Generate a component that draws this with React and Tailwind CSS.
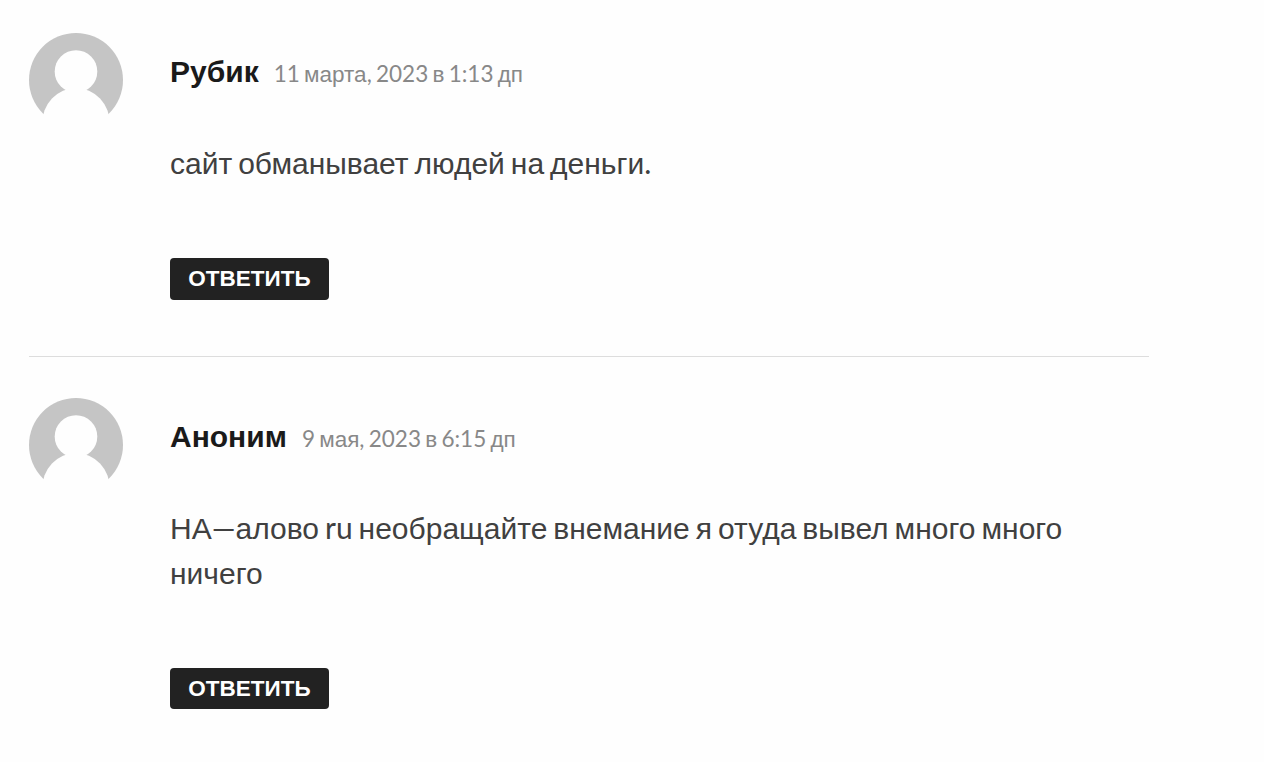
import React from 'react';

const comments = [
  {
    id: 1,
    author: 'Рубик',
    date: '11 марта, 2023 в 1:13 дп',
    text: 'сайт обманывает людей на деньги.',
  },
  {
    id: 2,
    author: 'Аноним',
    date: '9 мая, 2023 в 6:15 дп',
    text: 'НА—алово ru необращайте внемание я отуда вывел много много ничего',
  },
];

// Cyrillic goes in the sans font, everything else in Lato
const MixedText = ({ text }) =>
  text.split(/([а-яё]+)/i).map((part, i) => (
    <span key={i} className={i % 2 ? 'leading-none font-["Liberation_Sans",sans-serif]' : 'leading-none font-[Lato,sans-serif]'}>
      {part}
    </span>
  ));

const Avatar = () => (
  <svg viewBox="0 0 94 94" className="w-[94px] h-[94px] shrink-0">
    <circle cx="47" cy="47" r="47" fill="#c5c5c5" />
    <circle cx="47" cy="38.5" r="21.3" fill="#fefefe" />
    <ellipse cx="47" cy="91" rx="34" ry="36" fill="#fefefe" />
  </svg>
);

const Comment = ({ comment }) => (
  <li className="flex items-start gap-[47px] border-b border-[#dddddd] pb-14 mb-[41px] last:border-b-0 last:mb-0 last:pb-0">
    <Avatar />
    <div className='flex-1 pt-4 font-["Liberation_Sans",sans-serif]'>
      <div className="flex items-baseline gap-[15px] h-[47px] leading-[45px] whitespace-nowrap">
        <b className="text-[30px] text-[#1a1a1a]">{comment.author}</b>
        <time className="text-[22.5px] leading-[45px] [word-spacing:-1.5px] text-[#888888]">
          <MixedText text={comment.date} />
        </time>
      </div>
      <p className="mt-[45px] text-[30px] leading-[45px] [word-spacing:-1.7px] text-[#404040]">
        <MixedText text={comment.text} />
      </p>
      <button className="mt-[72px] block w-[159px] h-[41.5px] rounded bg-[#222222] text-center text-white font-bold text-[22.5px] leading-[41.5px]">
        ОТВЕТИТЬ
      </button>
    </div>
  </li>
);

const App = () => {
  return (
    <div className="min-h-screen bg-[#fefefe]">
      <ol className="w-[1120px] ml-[29px] pt-[33px]">
        {comments.map((comment) => (
          <Comment key={comment.id} comment={comment} />
        ))}
      </ol>
    </div>
  );
};

export default App;
